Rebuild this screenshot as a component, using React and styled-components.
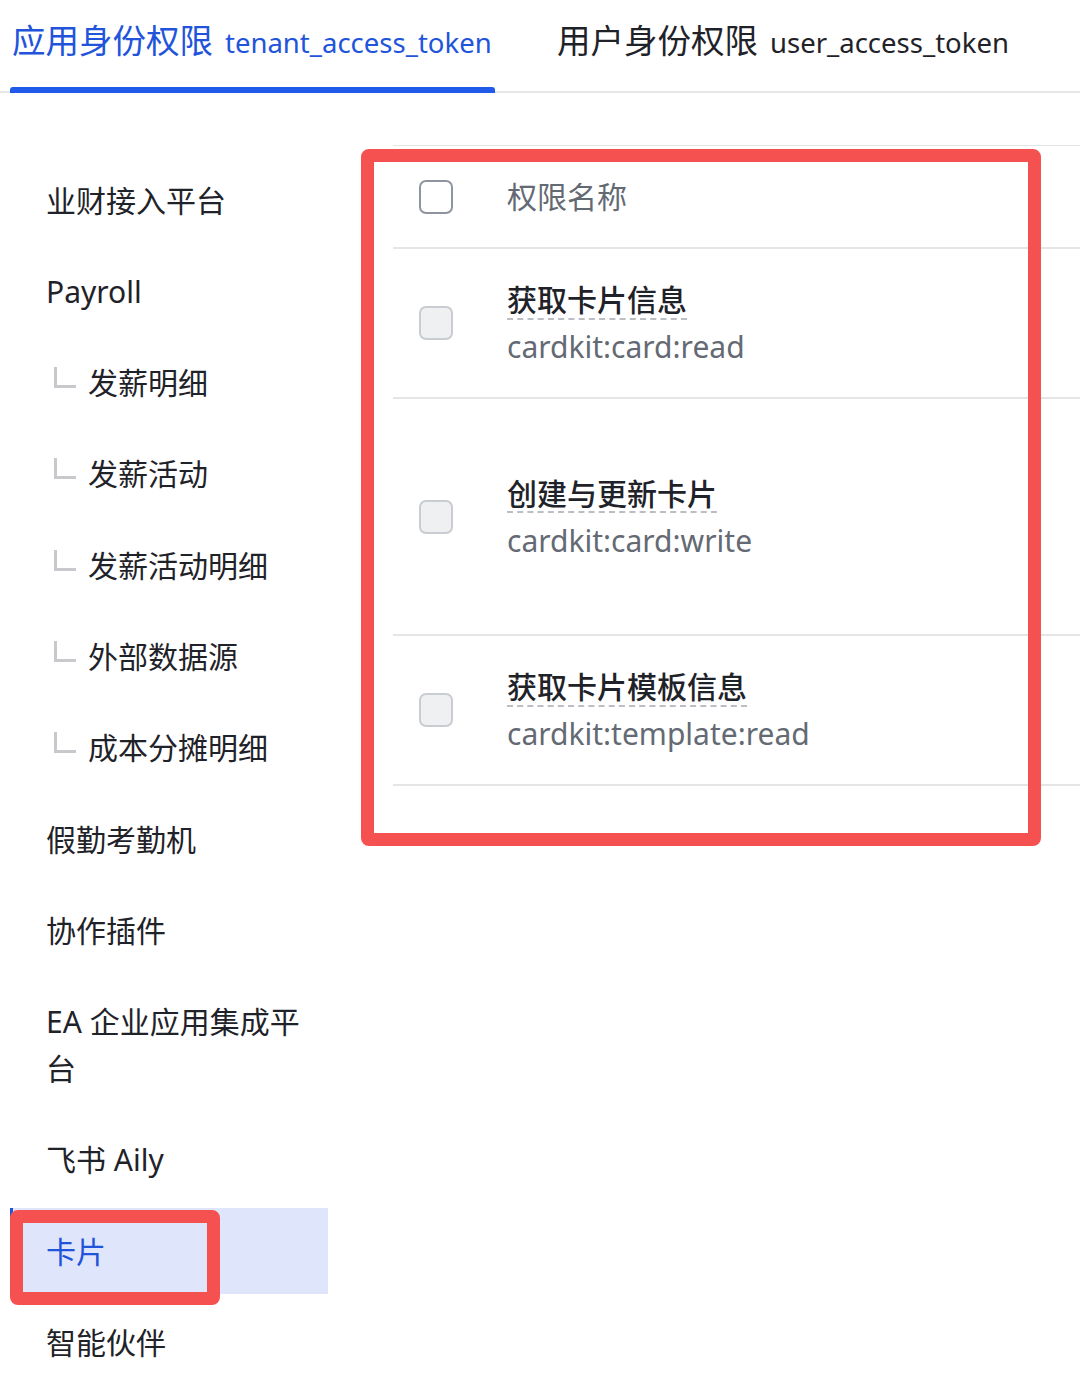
import React from 'react'
import styled, { createGlobalStyle } from 'styled-components'

const GlobalStyle = createGlobalStyle`
  html, body {
    margin: 0;
    padding: 0;
    background: #fff;
  }
  body {
    font-family: "Noto Sans", "Noto Sans CJK SC", sans-serif;
    color: #1f2329;
    overflow-x: hidden;
  }
`;

const Page = styled.div`
  width: 1080px;
  min-height: 1378px;
  overflow: hidden;
`;

const Tabs = styled.div`
  display: flex;
  align-items: flex-end;
  height: 93px;
  box-sizing: border-box;
  border-bottom: 2px solid #e4e5e7;
`;

const Tab = styled.div`
  position: relative;
  flex: none;
  display: flex;
  align-items: baseline;
  gap: 12px;
  height: 91px;
  box-sizing: border-box;
  padding: 18px 0 0 2px;
  line-height: 44px;
  margin-left: ${props => props.$offset}px;
  width: ${props => (props.$width ? `${props.$width}px` : 'auto')};
  color: ${props => (props.$active ? '#2254db' : '#1f2329')};

  &::after {
    content: '';
    display: ${props => (props.$active ? 'block' : 'none')};
    position: absolute;
    left: 0;
    right: 0;
    bottom: -2px;
    height: 6px;
    border-radius: 3px 3px 0 0;
    background: #1f5ae8;
  }
`;

const TabTitle = styled.span`
  font-size: 33.5px;
`;

const TabToken = styled.span`
  font-size: 27.5px;
`;

const Body = styled.div`
  display: flex;
  align-items: flex-start;
`;

const Sidebar = styled.nav`
  flex: none;
  width: 318px;
  margin-left: 10px;
  padding-top: 64px;
  display: flex;
  flex-direction: column;
  gap: 5px;
`;

const NavItem = styled.div`
  position: relative;
  display: flex;
  align-items: center;
  box-sizing: border-box;
  padding: 19.65px 10px 19.65px ${props => (props.$sub ? 41 : 33)}px;
  font-size: 30px;
  line-height: 47px;
  color: ${props => (props.$selected ? '#2254db' : '#1f2329')};
  background: ${props => (props.$selected ? '#dfe6fc' : 'transparent')};
  border-left: 3px solid ${props => (props.$selected ? '#2254db' : 'transparent')};
`;

const Branch = styled.span`
  flex: none;
  width: 19px;
  height: 18px;
  margin: -10px 12px 0 0;
  border-left: 3px solid #c8c9cc;
  border-bottom: 3px solid #c8c9cc;
`;

const Mark = styled.div`
  position: absolute;
  left: ${props => props.$left}px;
  top: ${props => props.$top}px;
  width: ${props => props.$w}px;
  height: ${props => props.$h}px;
  box-sizing: border-box;
  border: 13px solid #f65151;
  border-radius: 8px;
  pointer-events: none;
`;

const Main = styled.div`
  flex: 1;
  min-width: 0;
  padding: 52px 0 0 65px;
`;

const Table = styled.div`
  position: relative;
  width: 720px;
  border-top: 1px solid #e4e5e7;
`;

const Row = styled.div`
  display: flex;
  align-items: center;
  box-sizing: border-box;
  min-height: ${props => props.$h}px;
  padding-left: 26px;
  border-bottom: 2px solid #e4e5e7;
`;

const Check = styled.span`
  flex: none;
  width: 34px;
  height: 34px;
  box-sizing: border-box;
  border-radius: 7px;
  border: 2px solid ${props => (props.$disabled ? '#c9ccd0' : '#8f959e')};
  background: ${props => (props.$disabled ? '#eff0f1' : '#fff')};
  margin-right: 54px;
`;

const HeadText = styled.span`
  font-size: 30px;
  line-height: 47px;
  color: #646a73;
`;

const Cell = styled.div`
  display: flex;
  flex-direction: column;
  align-items: flex-start;
  font-size: 30px;
  line-height: 47px;
`;

const Title = styled.span`
  color: #1f2329;
  font-weight: 500;
  text-decoration: underline dashed #bbbfc4;
  text-decoration-thickness: 2px;
  text-underline-offset: 7px;
`;

const Code = styled.span`
  color: #646a73;
`;

const nav = [
  { label: '业财接入平台' },
  { label: 'Payroll' },
  { label: '发薪明细', sub: true },
  { label: '发薪活动', sub: true },
  { label: '发薪活动明细', sub: true },
  { label: '外部数据源', sub: true },
  { label: '成本分摊明细', sub: true },
  { label: '假勤考勤机' },
  { label: '协作插件' },
  { label: 'EA 企业应用集成平台' },
  { label: '飞书 Aily' },
  { label: '卡片', selected: true },
  { label: '智能伙伴' },
];

const scopes = [
  { title: '获取卡片信息', code: 'cardkit:card:read', h: 150 },
  { title: '创建与更新卡片', code: 'cardkit:card:write', h: 237 },
  { title: '获取卡片模板信息', code: 'cardkit:template:read', h: 150 },
];

const App = () => {
  return (
    <Page>
      <GlobalStyle />
      <Tabs>
        <Tab $active $offset={10} $width={485}>
          <TabTitle>应用身份权限</TabTitle>
          <TabToken>tenant_access_token</TabToken>
        </Tab>
        <Tab $offset={60}>
          <TabTitle>用户身份权限</TabTitle>
          <TabToken>user_access_token</TabToken>
        </Tab>
      </Tabs>
      <Body>
        <Sidebar>
          {nav.map(item => (
            <NavItem key={item.label} $sub={item.sub} $selected={item.selected}>
              {item.sub && <Branch />}
              <span>{item.label}</span>
              {item.selected && <Mark $left={-3} $top={2} $w={210} $h={95} />}
            </NavItem>
          ))}
        </Sidebar>
        <Main>
          <Table>
            <Row $h={103}>
              <Check />
              <HeadText>权限名称</HeadText>
            </Row>
            {scopes.map(s => (
              <Row key={s.code} $h={s.h}>
                <Check $disabled />
                <Cell>
                  <Title>{s.title}</Title>
                  <Code>{s.code}</Code>
                </Cell>
              </Row>
            ))}
            <Mark $left={-32} $top={3} $w={680} $h={697} />
          </Table>
        </Main>
      </Body>
    </Page>
  )
}

export default App
